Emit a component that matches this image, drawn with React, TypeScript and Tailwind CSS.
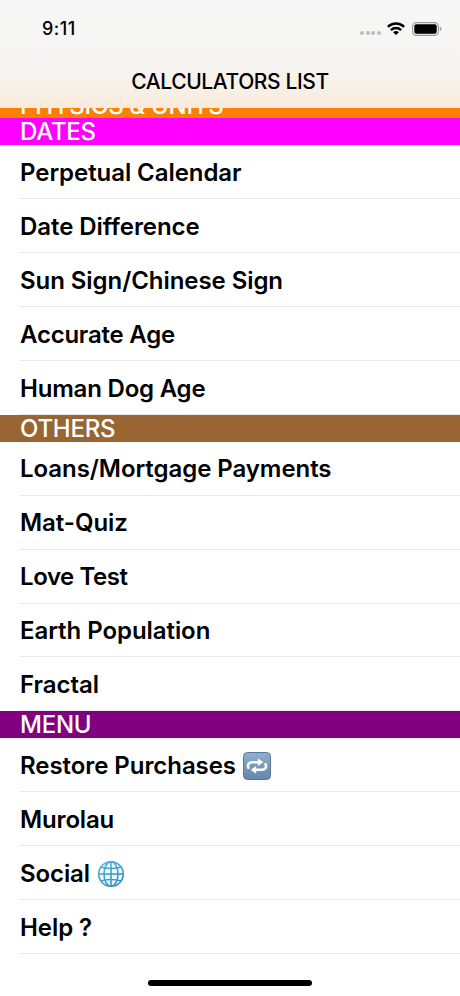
import type { ReactNode } from 'react';

// ── Icons ──────────────────────────────────────────────────────────────

function WifiIcon() {
  return (
    <svg className="w-[18px] h-[13px]" viewBox="0 0 18 13" fill="none" stroke="#000" strokeWidth={2.5}>
      <path d="M0.9 4.9C5.4 0.4 12.6 0.4 17.1 4.9" />
      <path d="M3.9 8.1C6.8 5.3 11.2 5.3 14.1 8.1" />
      <path d="M9 13L6.1 10.2C7.8 8.7 10.2 8.7 11.9 10.2Z" fill="#000" stroke="none" />
    </svg>
  );
}

function BatteryIcon() {
  return (
    <svg className="w-[30px] h-[14px]" viewBox="0 0 30 14" fill="none">
      <rect x="0.6" y="0.6" width="25.8" height="12.8" rx="3.8" stroke="#9b9b9b" strokeWidth={1.1} />
      <rect x="2.3" y="2.3" width="22.4" height="9.4" rx="2" fill="#000" />
      <path d="M27.8 4.8C29.9 5.5 29.9 8.5 27.8 9.2Z" fill="#9b9b9b" />
    </svg>
  );
}

function RepeatIcon() {
  return (
    <svg className="w-7 h-7" viewBox="0 0 28 28" fill="none">
      <defs>
        <linearGradient id="repeat-bg" x1="0" y1="0" x2="0" y2="1">
          <stop offset="0" stopColor="#8fb0d0" />
          <stop offset="1" stopColor="#6685ab" />
        </linearGradient>
      </defs>
      <rect x="0.5" y="0.5" width="27" height="27" rx="4" fill="url(#repeat-bg)" stroke="#587696" />
      <path
        d="M5.4 15.8C4.2 12.4 6 10.2 9.2 10.2H15M22.6 12.2C23.8 15.6 22 17.8 18.8 17.8H13"
        stroke="#fff"
        strokeWidth={2.5}
        strokeLinecap="round"
      />
      <path d="M15.2 6.8L19.8 10.2L15.2 13.6Z" fill="#fff" stroke="#fff" strokeWidth={0.6} strokeLinejoin="round" />
      <path d="M12.8 14.4L8.2 17.8L12.8 21.2Z" fill="#fff" stroke="#fff" strokeWidth={0.6} strokeLinejoin="round" />
    </svg>
  );
}

function GlobeIcon() {
  return (
    <svg className="w-7 h-7" viewBox="0 0 28 28" fill="none" stroke="url(#globe-line)" strokeWidth={1.6}>
      <defs>
        <linearGradient id="globe-line" gradientUnits="userSpaceOnUse" x1="4" y1="2" x2="24" y2="26">
          <stop offset="0" stopColor="#49b8de" />
          <stop offset="1" stopColor="#3887bd" />
        </linearGradient>
      </defs>
      <circle cx="14" cy="14" r="12.3" fill="#f2fbff" />
      <ellipse cx="14" cy="14" rx="7" ry="12.3" />
      <path d="M14 1.7V26.3" />
      <path d="M1.7 14H26.3" />
      <path d="M4 7C9.6 9 18.4 9 24 7" />
      <path d="M4 21C9.6 19 18.4 19 24 21" />
    </svg>
  );
}

// ── List Data ──────────────────────────────────────────────────────────

type Item = { label: string; spacing?: string; icon?: ReactNode };

const sections: { title: string; color: string; items: Item[] }[] = [
  { title: 'PHYSICS & UNITS', color: 'bg-[#ff8000]', items: [] },
  {
    title: 'DATES',
    color: 'bg-[#ff00ff]',
    items: [
      { label: 'Perpetual Calendar' },
      { label: 'Date Difference' },
      { label: 'Sun Sign/Chinese Sign' },
      { label: 'Accurate Age', spacing: 'tracking-[-0.22px]' },
      { label: 'Human Dog Age', spacing: 'tracking-[-0.2px]' },
    ],
  },
  {
    title: 'OTHERS',
    color: 'bg-[#996633]',
    items: [
      { label: 'Loans/Mortgage Payments' },
      { label: 'Mat-Quiz' },
      { label: 'Love Test', spacing: 'tracking-[-0.42px]' },
      { label: 'Earth Population' },
      { label: 'Fractal' },
    ],
  },
  {
    title: 'MENU',
    color: 'bg-[#800080]',
    items: [
      { label: 'Restore Purchases', icon: <RepeatIcon /> },
      { label: 'Murolau', spacing: 'tracking-[-0.15px]' },
      { label: 'Social', spacing: 'tracking-[-0.1px]', icon: <GlobeIcon /> },
      { label: 'Help ?' },
    ],
  },
];

// ── Components ─────────────────────────────────────────────────────────

function StatusBar() {
  return (
    <div className="flex items-center justify-between h-[57px] pl-[42px] pr-[18px]">
      <span className="text-[18px] font-medium tracking-[0.5px]">9:11</span>
      <div className="flex items-center">
        <div className="flex gap-[1.6px] mt-[9px] mr-[6px]">
          {[0, 1, 2, 3].map((dot) => (
            <span key={dot} className="w-1 h-1 rounded-full bg-[#bcbcbc]" />
          ))}
        </div>
        <WifiIcon />
        <div className="ml-[7px]">
          <BatteryIcon />
        </div>
      </div>
    </div>
  );
}

function SectionHeader({ title, color }: { title: string; color: string }) {
  return (
    <div className={`h-[26.7px] pl-5 pt-px flex items-center text-2xl font-[450] text-white tracking-[-0.25px] ${color}`}>
      {title}
    </div>
  );
}

function Row({ label, spacing = 'tracking-[-0.06px]', icon }: Item) {
  return (
    <div className="h-[53.97px] ml-5 pt-[2.2px] flex items-center gap-[7px] border-b border-[#e8e8e9]">
      <span className={`text-2xl font-semibold whitespace-nowrap ${spacing}`}>{label}</span>
      {icon}
    </div>
  );
}

// ── Page ───────────────────────────────────────────────────────────────

export default function App() {
  return (
    <div className="w-[460px] h-[996px] flex flex-col overflow-hidden bg-white text-black font-['Inter',sans-serif]">
      <header className="h-[108px] shrink-0 bg-[linear-gradient(to_bottom,#f7f7f7_0%,#f6f5f4_55%,#f8f0e7_82%,#f9ebdb_100%)]">
        <StatusBar />
        <h1 className="h-12 pt-0.5 flex items-center justify-center text-[21px] font-medium tracking-[-0.4px]">
          CALCULATORS LIST
        </h1>
      </header>

      <main className="flex-1 overflow-hidden">
        <div className="-mt-[16.3px]">
          {sections.map((section) => (
            <section key={section.title}>
              <SectionHeader title={section.title} color={section.color} />
              {section.items.map((item) => (
                <Row key={item.label} {...item} />
              ))}
            </section>
          ))}
        </div>
      </main>

      <footer className="h-4 shrink-0 flex justify-center">
        <div className="w-[164px] h-[6px] rounded-full bg-black" />
      </footer>
    </div>
  );
}
